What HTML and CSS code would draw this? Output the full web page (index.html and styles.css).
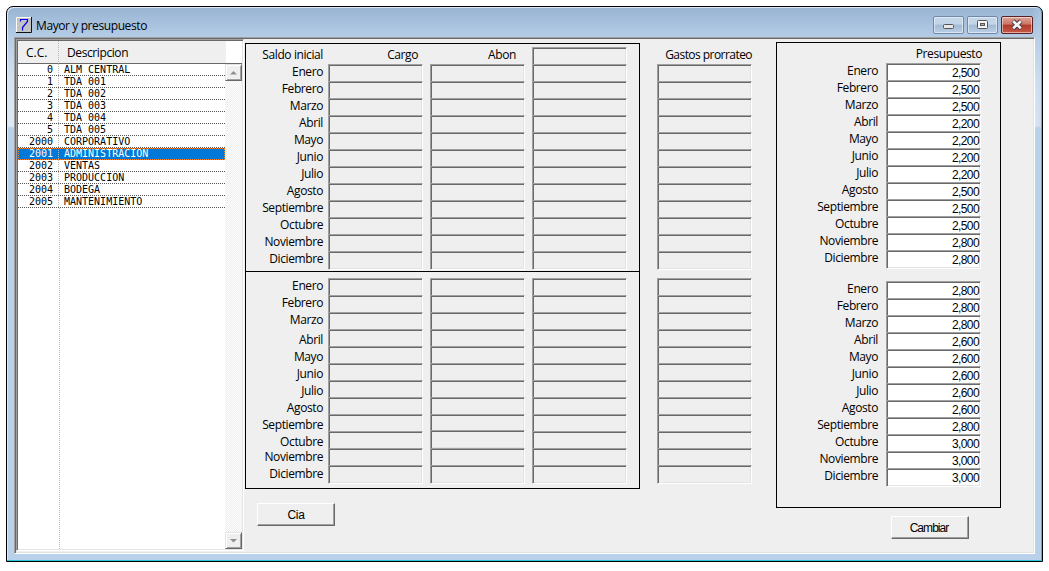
FILE: index.html
```html
<!DOCTYPE html>
<html lang="es">
<head>
  <meta charset="UTF-8">
  <title>Mayor y presupuesto</title>
  <link rel="stylesheet" href="styles.css">
</head>
<body>
  <div class="window">

    <!-- Title bar -->
    <div class="titlebar">
      <svg class="app-icon" width="16" height="16" viewBox="0 0 16 16">
        <rect width="16" height="16" fill="#c3c3c3"/>
        <path d="M.5 15V.5H15" fill="none" stroke="#fff"/>
        <path d="M15.5 0V15.5H0" fill="none" stroke="#111"/>
        <path d="M4.500 4.500V2.500H11.500V4.500L6.500 10.500V13.500" fill="none" stroke="#0000f0" stroke-width="1.200"/>
      </svg>
      <span class="title">Mayor y presupuesto</span>
      <div class="controls">
        <span class="ctl"><svg width="29" height="16"><rect x="9.5" y="7.5" width="10" height="4" rx="1" fill="#e8e8e8" stroke="#555"/></svg></span>
        <span class="ctl"><svg width="29" height="16"><rect x="9.5" y="3.5" width="10" height="8" rx="1" fill="#f4f4f4" stroke="#555"/><rect x="12.5" y="6.5" width="4" height="2" fill="#9db5d0" stroke="#555"/></svg></span>
        <span class="ctl close"><svg width="30" height="16"><path d="M11 4L19 11.500M19 4L11 11.500" stroke="#4b3b42" stroke-width="4.600"/><path d="M11.200 4.200L18.800 11.300M18.800 4.200L11.200 11.300" stroke="#f7f7f7" stroke-width="2.600"/></svg></span>
      </div>
    </div>

    <div class="client">
      <!-- Cost centres -->
      <div class="list">
        <div class="list-head"><span class="col-cc">C.C.</span><span class="col-desc">Descripcion</span></div>
        <div class="list-body">
          <div class="rows" id="rows"></div>
          <div class="scrollbar">
            <span class="sb-btn"><svg width="13" height="13"><path d="M3 8.500L6.500 5L10 8.500Z" fill="#8f8f8f"/></svg></span>
            <span class="sb-btn"><svg width="13" height="13"><path d="M3 5H10L6.500 8.500Z" fill="#8f8f8f"/></svg></span>
          </div>
        </div>
      </div>

      <!-- Ledger -->
      <div class="ledger-side">
        <div class="ledger">
          <div class="block first">
            <div class="months" id="m1"><span class="label">Saldo inicial</span></div>
            <div class="fields c1" id="cargo1"><span class="label head-cargo">Cargo</span></div>
            <div class="fields" id="abon1"><span class="label head-abon">Abon</span></div>
            <div class="fields total" id="total1"><div class="field"></div></div>
          </div>
          <div class="block second">
            <div class="months" id="m2"></div>
            <div class="fields c1" id="cargo2"></div>
            <div class="fields" id="abon2"></div>
            <div class="fields" id="total2"></div>
          </div>
        </div>
        <button class="btn">Cia</button>
      </div>

      <!-- Gastos prorrateo -->
      <div class="gastos">
        <div class="fields" id="gastos1"><span class="label">Gastos prorrateo</span></div>
        <div class="fields" id="gastos2"></div>
      </div>

      <!-- Presupuesto -->
      <div class="budget-side">
        <div class="budget">
          <div class="budget-head label">Presupuesto</div>
          <div class="budget-block">
            <div class="months" id="m3"></div>
            <div class="fields" id="pres1"></div>
          </div>
          <div class="budget-block">
            <div class="months" id="m4"></div>
            <div class="fields" id="pres2"></div>
          </div>
        </div>
        <button class="btn wide">Cambiar</button>
      </div>
    </div>
  </div>

  <script src="script.js"></script>
</body>
</html>
```

FILE: styles.css
```css
/* Reset + base */
* { margin:0; padding:0; box-sizing:border-box; }
body {
  background:#fff; color:#000; overflow:hidden;
  font:12px/17px "Open Sans", "Noto Sans", sans-serif;
  letter-spacing:-0.4px;
}

/* Window frame */
.window {
  width:1037px; height:556px;
  margin:6px;
  padding:0 7px 7px;
  border:1px solid #000;
  border-radius:7px 7px 0 0;
  background:
    linear-gradient(90deg, transparent 99%, rgba(187,208,233,.5)),
    linear-gradient(#98b4d2 0, #b4cce6 30px, #d5e3f2 75px, #dfe9f5 119px, #b9d1ea 121px);
  box-shadow:inset -1px -1px 0 #29c8dc, inset 1px 1px 0 #dce9f6;
}
.titlebar { display:flex; height:30px; }
.app-icon { margin:10px 0 0 2px; }
.title { margin:10px 0 0 4px; }
.controls { display:flex; gap:3px; margin:9px 2px 0 auto; }
.ctl {
  width:31px; height:18px;
  border:1px solid #6f8aa8; border-radius:2px;
  background:linear-gradient(#c3d5e9 45%, #a3bad4 50%, #b9cfe6);
  box-shadow:inset 0 0 0 1px rgba(255,255,255,.5);
}
.ctl svg { display:block; }
.close {
  width:32px;
  border-color:#5b2026;
  background:linear-gradient(#dda397 0, #cc7566 45%, #b0392a 50%, #c8594a);
}

/* Sunken edges */
.client, .list, .field {
  border:1px solid;
  border-color:#a0a0a0 #fff #fff #a0a0a0;
  box-shadow:inset 1px 1px 0 #696969, inset -1px -1px 0 #e3e3e3;
}
.client {
  display:flex;
  width:1021px; height:517px;
  padding:1px;
  background:#efefef;
}

/* List */
.list {
  width:228px; height:512px;
  padding:1px;
  background:#fff;
}
.list-head { display:flex; height:23px; }
.list-head span { background:#efefef; border-bottom:1px solid #696969; line-height:23px; }
.list-head .col-cc { width:41px; padding-left:8px; border-right:1px dotted #b8b8b8; letter-spacing:0; }
.col-desc { width:167px; padding-left:8px; }
.list-head::after { content:""; flex:1; border-bottom:1px solid #696969; }
.list-body { display:flex; height:485px; }
.rows {
  width:207px;
  font:10px/12px "DejaVu Sans Mono", monospace;
  letter-spacing:0;
  display:flex; flex-direction:column;
}
.rows::after { content:""; flex:1; width:41px; border-right:1px dotted #b8b8b8; }
.row { display:flex; height:12px; border-bottom:1px dotted #555; }
.row span { height:11px; }
.cc { width:41px; padding-right:5px; text-align:right; border-right:1px dotted #b8b8b8; }
.desc { padding-left:5px; }
.row.selected { background:#0078d7; color:#fff; outline:1px dotted #ff8728; outline-offset:-1px; border-bottom-color:#0078d7; }
.scrollbar {
  display:flex; flex-direction:column; justify-content:space-between;
  width:17px;
  background:repeating-conic-gradient(#fff 0 25%, #ededed 0 50%) 0 0 / 2px 2px;
}
.sb-btn, .btn {
  border:1px solid;
  border-color:#e3e3e3 #696969 #696969 #e3e3e3;
  background:#efefef;
  box-shadow:inset 1px 1px 0 #fff, inset -1px -1px 0 #a0a0a0;
}
.sb-btn { height:17px; padding:1px; }
.sb-btn svg { display:block; }

/* Form pieces */
.label { height:17px; line-height:15px; white-space:nowrap; text-align:right; }
.months { display:flex; flex-direction:column; text-align:right; }
.fields { display:flex; flex-direction:column; width:95px; }
.field {
  height:19px; margin-bottom:-2px;
  background:#efefef;
}
.btn {
  display:block;
  width:78px; height:23px;
  border-color:#fff #696969 #696969 #fff;
  box-shadow:inset -1px -1px 0 #a0a0a0;
  font:12px/20px "Liberation Sans", sans-serif;
  letter-spacing:-.3px;
}
.btn.wide { padding-right:2px; letter-spacing:-.95px; }

/* Ledger */
.ledger-side { margin:4px 0 0 1px; }
.ledger { width:395px; height:446px; border:1px solid #000; }
.block { display:flex; gap:7px; }
.block .months { width:77px; }
.block .c1 { margin-left:-2px; }
.first { height:228px; padding-top:3px; border-bottom:1px solid #000; }
.second { padding-top:6px; }
.label.head-cargo { padding-right:5px; }
.label.head-abon { padding-right:9px; }
.shift { margin-top:-1px; margin-bottom:-1px; }
.months .late { margin-top:3px; }
.months .early { margin-top:-2px; }
.ledger-side .btn { margin:14px 0 0 12px; }

/* Gastos prorrateo */
.gastos { margin:8px 0 0 17px; }
.gastos .label { letter-spacing:-.55px; }
.gastos #gastos2 { margin-top:10px; }

/* Presupuesto */
.budget-side { margin:3px 0 0 24px; }
.budget { width:225px; height:466px; border:1px solid #000; }
.budget-head { height:20px; padding:3px 18px 0 0; }
.budget-block { display:flex; gap:8px; height:218px; }
.budget-block .months { width:101px; }
.budget .field {
  padding-right:1px;
  background:#fff;
  font:12px/18px "Liberation Sans", sans-serif;
  letter-spacing:-.6px;
  text-align:right;
}
.budget-side .btn { margin:8px 0 0 115px; }
```

FILE: script.js
```js
const months = ["Enero","Febrero","Marzo","Abril","Mayo","Junio","Julio","Agosto","Septiembre","Octubre","Noviembre","Diciembre"];

const centres = [
  ["0","ALM CENTRAL"], ["1","TDA 001"], ["2","TDA 002"], ["3","TDA 003"],
  ["4","TDA 004"], ["5","TDA 005"], ["2000","CORPORATIVO"], ["2001","ADMINISTRACION"],
  ["2002","VENTAS"], ["2003","PRODUCCION"], ["2004","BODEGA"], ["2005","MANTENIMIENTO"]
];

const budget = {
  pres1: ["2,500","2,500","2,500","2,200","2,200","2,200","2,200","2,500","2,500","2,500","2,800","2,800"],
  pres2: ["2,800","2,800","2,800","2,600","2,600","2,600","2,600","2,600","2,800","3,000","3,000","3,000"]
};

function add(parent, cls, text) {
  const el = document.createElement('div');
  el.className = cls;
  el.textContent = text || '';
  document.getElementById(parent).appendChild(el);
  return el;
}

// cost centre rows
centres.forEach(([cc, desc]) => {
  const row = add('rows', cc === '2001' ? 'row selected' : 'row');
  row.innerHTML = `<span class="cc">${cc}</span><span class="desc">${desc}</span>`;
});

// month labels
['m1','m2','m3','m4'].forEach(id => months.forEach(m => {
  const el = add(id, 'label', m);
  if (id === 'm2' && m === 'Abril') el.classList.add('late');
  if (id === 'm2' && m === 'Noviembre') el.classList.add('early');
}));

// empty ledger fields
['cargo1','abon1','total1','gastos1','cargo2','abon2','total2','gastos2'].forEach(id => months.forEach(m => {
  const el = add(id, 'field');
  if (id === 'abon2' && m === 'Octubre') el.classList.add('shift');
}));

// budget amounts
Object.keys(budget).forEach(id => budget[id].forEach(v => add(id, 'field', v)));
```
